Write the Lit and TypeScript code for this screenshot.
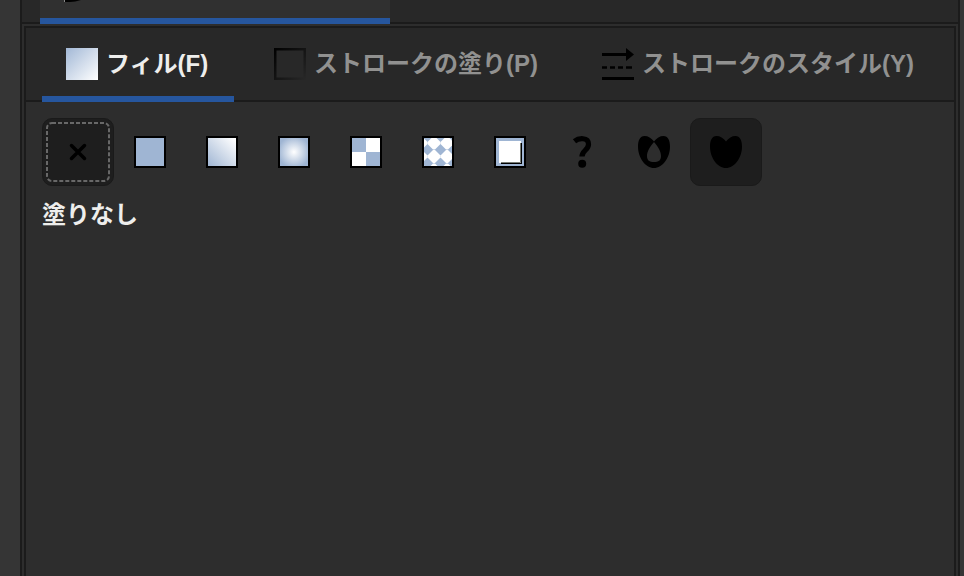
import { LitElement, html, css, svg, nothing } from "lit";
import { customElement } from "lit/decorators.js";
import { classMap } from "lit/directives/class-map.js";

const icon = (body: unknown) => html`<svg width="32" height="32" viewBox="0 0 32 32">${body}</svg>`;
const frame = svg`<rect x="1" y="1" width="30" height="30" fill="none" stroke="#000" stroke-width="2"/>`;

const fillIcon = icon(svg`
  <defs><linearGradient id="f" x1="0" y1="0" x2="1" y2="1"><stop offset="0" stop-color="#a2b8d6"/><stop offset="1" stop-color="#fff"/></linearGradient></defs>
  <rect width="32" height="32" fill="url(#f)"/>`);

const strokeIcon = icon(svg`
  <defs><linearGradient id="s" x1="0" y1="0" x2="1" y2="1"><stop offset="0" stop-color="#000"/><stop offset="1" stop-color="#000" stop-opacity="0"/></linearGradient></defs>
  <path d="M0 0H32V32H0ZM2.500 2.500V29.500H29.500V2.500Z" fill-rule="evenodd" fill="url(#s)"/>`);

const styleIcon = icon(svg`
  <path d="M0 5H24V0L32 6.500L24 13V8H0Z"/>
  <path d="M0 19.500H5M8 19.500H13M16 19.500H21M24 19.500H30" stroke="#000" stroke-width="2.600"/>
  <rect y="29" width="32" height="3"/>`);

const noneIcon = icon(svg`<path d="M9.500 9.500L22.500 22.500M22.500 9.500L9.500 22.500" stroke="#000" stroke-width="3.500" stroke-linecap="round"/>`);

const flatIcon = icon(svg`<rect width="32" height="32" fill="#9fb5d3"/>${frame}`);

const linearIcon = icon(svg`
  <defs><linearGradient id="l" x1="0" y1="1" x2="1" y2="0"><stop offset="0.050" stop-color="#9fb5d3"/><stop offset="0.900" stop-color="#fff"/></linearGradient></defs>
  <rect width="32" height="32" fill="url(#l)"/>${frame}`);

const radialIcon = icon(svg`
  <defs><radialGradient id="r"><stop offset="0" stop-color="#fff"/><stop offset="1" stop-color="#9fb5d3"/></radialGradient></defs>
  <rect width="32" height="32" fill="url(#r)"/>${frame}`);

const meshIcon = icon(svg`
  <rect width="32" height="32" fill="#fff"/>
  <path d="M2 2H16V16H2ZM16 16H30V30H16Z" fill="#9fb5d3"/>${frame}`);

const patternIcon = icon(svg`
  <defs><clipPath id="c"><rect x="2" y="2" width="28" height="28"/></clipPath></defs>
  <rect width="32" height="32" fill="#9fb5d3"/>
  <g fill="#fff" clip-path="url(#c)">
    ${[-1, 12, 25].map((x) =>
      [7, 20.5, 34].map((y) => svg`<path transform=${`translate(${x} ${y})`} d="M-1 -6.500H1L6.500 -1V1L1 6.500H-1L-6.500 1V-1Z"/>`)
    )}
  </g>${frame}`);

const swatchIcon = icon(svg`
  <rect width="32" height="32" fill="#9fb5d3"/>
  <rect x="7" y="7" width="21" height="21"/>
  <rect x="5" y="5" width="22" height="22" fill="#fff"/>
  <path d="M7 26.500H26.500V7" fill="none" stroke="#777b74"/>${frame}`);

const unknownIcon = icon(svg`
  <path d="M8.500 5.200C12.500 2 22.500 0.800 22.500 8.200C22.500 14 16 14.500 16 20.500" fill="none" stroke="#000" stroke-width="5.200"/>
  <circle cx="16.200" cy="27.800" r="4"/>`);

const heart = "M16 5.500C13.500 2 10 0 6.500 0C2 0 0 4.500 0 10.500C0 22 7.500 32 16 32C24.500 32 32 22 32 10.500C32 4.500 30 0 25.500 0C22 0 18.500 2 16 5.500Z";
const evenOddIcon = icon(svg`<path fill-rule="evenodd" d="${heart}M16 6C12 10.500 9 15.500 9 20C9 24.500 11.500 26 16 26C20.500 26 23 24.500 23 20C23 15.500 20 10.500 16 6Z"/>`);
const nonZeroIcon = icon(svg`<path d=${heart}/>`);

const tabs = [
  { name: "fill", label: "フィル(F)", glyph: fillIcon, active: true },
  { name: "paint", label: "ストロークの塗り(P)", glyph: strokeIcon, active: false },
  { name: "style", label: "ストロークのスタイル(Y)", glyph: styleIcon, active: false },
];

const modes = [
  { glyph: noneIcon, on: true, focus: true },
  { glyph: flatIcon }, { glyph: linearIcon }, { glyph: radialIcon },
  { glyph: meshIcon }, { glyph: patternIcon }, { glyph: swatchIcon },
  { glyph: unknownIcon }, { glyph: evenOddIcon },
  { glyph: nonZeroIcon, on: true },
] as { glyph: unknown; on?: boolean; focus?: boolean }[];

@customElement("app-root")
export class AppRoot extends LitElement {
  static styles = css`
    :host {
      display: block;
      height: 576px;
      overflow: hidden;
      background: #353535;
      font: bold 24px/34px "Liberation Sans", "Noto Sans CJK JP", sans-serif;
      color: #eeeeec;
    }
    * { box-sizing: border-box; }
    svg { display: block; flex: none; }
    .dock {
      display: flex;
      flex-direction: column;
      height: 576px;
      margin: 0 4px 0 20px;
      border: solid #1b1b1b;
      border-width: 0 2px;
      background: #2d2d2d;
    }
    .docktabs {
      flex: none;
      height: 24px;
      padding-left: 18px;
      background: #282828;
      border-bottom: 2px solid #1b1b1b;
    }
    .docktab {
      width: 350px;
      height: 24px;
      padding-left: 24px;
      background: #303030;
      border-bottom: 6px solid #26569e;
    }
    .panel {
      flex: 1;
      margin: 2px 2px 0;
      border: 2px solid #1b1b1b;
      border-bottom: 0;
    }
    .tabs {
      display: flex;
      height: 74px;
      padding-left: 16px;
      background: #282828;
      border-bottom: 2px solid #1b1b1b;
    }
    .tab {
      display: flex;
      align-items: center;
      gap: 8px;
      height: 74px;
      padding: 4px 24px 0;
      color: #919190;
      white-space: nowrap;
      border-bottom: 6px solid transparent;
    }
    .fill { width: 192px; margin-right: 16px; }
    .paint { width: 312px; margin-right: 16px; }
    .active { color: #eeeeec; border-color: #26569e; }
    .modes { display: flex; padding: 16px 16px 0; }
    .mode {
      display: flex;
      align-items: center;
      justify-content: center;
      width: 72px;
      height: 68px;
      border-radius: 10px;
    }
    .on { background: #1e1e1e; border: 1px solid #1a1a1a; }
    .status { padding: 12px 16px 0; }
  `;

  render() {
    return html`
      <div class="dock">
        <div class="docktabs"><div class="docktab">
          <svg width="18" height="3" viewBox="0 0 18 3"><path d="M0 0H17Q11 2 6 2H0Z"/><path d="M0.500 0V2" stroke="#888"/></svg>
        </div></div>
        <div class="panel">
          <div class="tabs">
            ${tabs.map((t) => html`<div class=${classMap({ tab: true, [t.name]: true, active: t.active })}>${t.glyph}<span>${t.label}</span></div>`)}
          </div>
          <div class="modes">
            ${modes.map((m) => html`<div class=${classMap({ mode: true, on: !!m.on })}>
              ${m.focus
                ? html`<svg width="70" height="66" viewBox="0 0 70 66">
                    <rect x="4" y="4" width="62" height="58" rx="5" fill="none" stroke="#686868" stroke-width="2" stroke-dasharray="4 2"/>
                    <path d="M28.500 26.500L41.500 39.500M41.500 26.500L28.500 39.500" stroke="#000" stroke-width="3.500" stroke-linecap="round"/>
                  </svg>`
                : m.glyph ?? nothing}
            </div>`)}
          </div>
          <div class="status">塗りなし</div>
        </div>
      </div>`;
  }
}
